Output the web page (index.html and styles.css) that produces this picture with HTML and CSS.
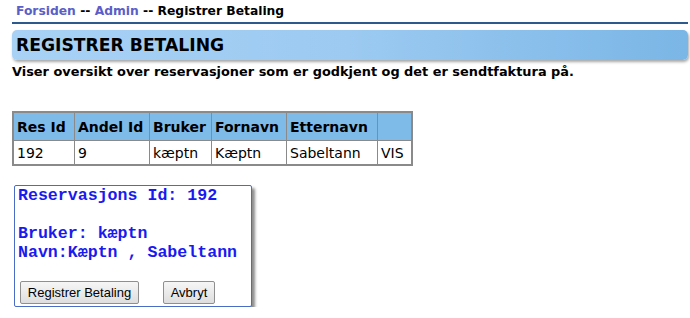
FILE: index.html
```html
<!DOCTYPE html>
<html>
<head>
<meta charset="utf-8">
<link rel="stylesheet" href="styles.css">
</head>
<body>
<div class="page">
  <div class="crumbs"><a class="crumb-link">Forsiden</a> -- <a class="crumb-link">Admin</a> -- Registrer Betaling</div>
  <div class="rule"></div>
  <h1 class="title">REGISTRER BETALING</h1>
  <p class="desc">Viser oversikt over reservasjoner som er godkjent og det er sendtfaktura på.</p>
  <table class="grid">
    <thead>
      <tr><th class="c1">Res Id</th><th class="c2">Andel Id</th><th class="c3">Bruker</th><th class="c4">Fornavn</th><th class="c5">Etternavn</th><th class="c6"></th></tr>
    </thead>
    <tbody>
      <tr><td>192</td><td>9</td><td>kæptn</td><td>Kæptn</td><td>Sabeltann</td><td>VIS</td></tr>
    </tbody>
  </table>
  <div class="dialog">
    <div class="info">Reservasjons Id: 192</div>
    <div class="info gap">Bruker: kæptn</div>
    <div class="info">Navn:Kæptn , Sabeltann</div>
    <div class="actions">
      <button class="btn btn-main">Registrer Betaling</button>
      <button class="btn btn-cancel">Avbryt</button>
    </div>
  </div>
</div>
</body>
</html>
```

FILE: styles.css
```css
html, body { margin: 0; padding: 0; background: #fff; }
body { font-family: "DejaVu Sans", Verdana, sans-serif; color: #000; }
.page { padding: 0 2px 0 12px; }
.crumbs { font-size: 12.3px; font-weight: bold; padding: 3px 0 0 4px; height: 19px; line-height: 16px; }
.crumb-link { color: #5a5fc8; text-decoration: none; }
.rule { height: 2px; background: #2c5a8c; }
.title {
  margin: 6px 0 0 0; height: 30px; line-height: 30px; box-sizing: border-box;
  font-size: 17.2px; font-weight: bold; padding-left: 4px;
  border-radius: 5px;
  background: linear-gradient(to right, #a9d1f6, #9ccaf1 50%, #7ab6e6);
  box-shadow: 1px 2px 3px rgba(0,0,0,0.35);
}
.desc { margin: 4px 0 0 0; font-size: 12.9px; font-weight: bold; line-height: 16px; }
.grid { border-collapse: collapse; table-layout: fixed; margin-top: 31px; border: 2px solid #8a8a8a; font-size: 14px; }
.grid th, .grid td { border: 1px solid #8a8a8a; padding: 0 3px; text-align: left; white-space: nowrap; overflow: hidden; }
.grid th { background: #7fbbe8; font-weight: bold; height: 27px; }
.grid td { height: 23px; font-weight: normal; }
.c1 { width: 54px; } .c2 { width: 68px; } .c3 { width: 55px; } .c4 { width: 68px; } .c5 { width: 84px; } .c6 { width: 27px; }
.dialog {
  margin: 19px 0 0 2px; width: 238px; box-sizing: border-box;
  border: 1px solid #4a6cc4; border-radius: 2px; background: #fff;
  box-shadow: 3px 3px 3px rgba(0,0,0,0.45);
  padding: 0 0 2px 3px;
  display: flex; flex-direction: column;
}
.info { font-family: "Liberation Mono", "Courier New", monospace; font-weight: bold; font-size: 16.6px; color: #1a1af0; line-height: 19px; }
.gap { margin-top: 19px; }
.actions { display: flex; gap: 24px; margin-top: 19px; padding-left: 2px; }
.btn {
  font-family: "Liberation Sans", Arial, sans-serif; font-size: 13px; height: 23px; padding: 0 6px;
  background: linear-gradient(#f6f6f6, #dedede); border: 1px solid #8f8f8f; border-radius: 2px; color: #000;
}
.btn-main { width: 119px; }
.btn-cancel { width: 52px; }
```
